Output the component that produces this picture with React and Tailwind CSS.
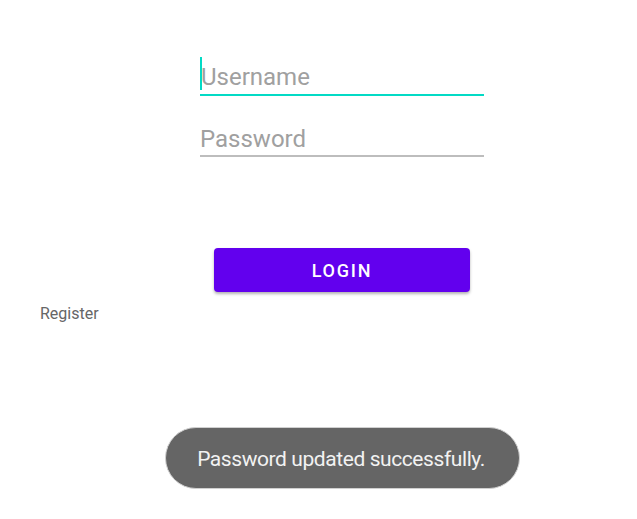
import React from "react";

const App = () => {
  return (
    <div className="w-full h-[519px] bg-white overflow-hidden font-['Roboto',sans-serif]">
      {/* Fields */}
      <div className="ml-[200px] w-[284px] pt-[61px]">
        <div className="relative h-[35px] border-b-2 border-[#03dac5]">
          <span className="absolute left-0 top-[-4px] w-[2px] h-[33px] bg-[#03dac5]" />
          <p className="text-[24px] leading-[32px] text-[#a0a0a0] pl-px">Username</p>
        </div>
        <div className="mt-[26px] h-[35px] border-b-2 border-[#bdbdbd]">
          <p className="text-[24px] leading-[32px] pt-px text-[#a0a0a0]">Password</p>
        </div>
      </div>

      {/* Login button */}
      <button className="mt-[91px] ml-[214px] w-[256px] h-[44px] rounded-[4px] bg-[#6200ee] text-white text-[18px] font-medium tracking-[0.1em] shadow-[0_2px_3px_rgba(0,0,0,0.3)]">
        LOGIN
      </button>

      {/* Register link */}
      <p className="mt-[12px] ml-[40px] text-[16px] leading-[20px] text-[#666666]">Register</p>

      {/* Toast */}
      <div className="mt-[103px] ml-[165px] w-[355px] h-[62px] pt-[4px] rounded-full bg-[#656565] flex items-center justify-center border border-[#d0d0d0]">
        <span className="text-[21px] text-[#f2f2f2] tracking-[-0.02em] -ml-[3px]">Password updated successfully.</span>
      </div>
    </div>
  );
};

export default App;
